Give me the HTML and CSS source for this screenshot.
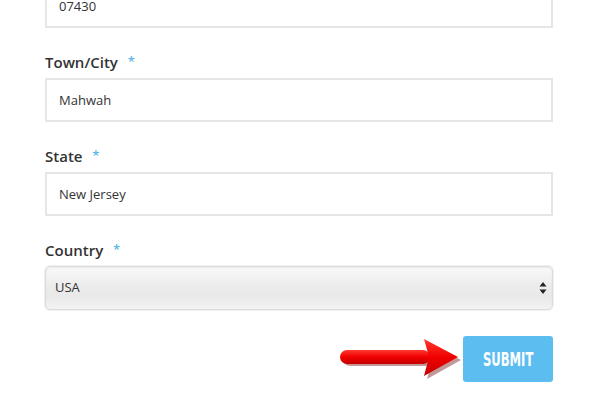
FILE: index.html
```html
<!DOCTYPE html>
<html lang="en">
<head>
  <meta charset="UTF-8" />
  <title>Billing Address</title>
  <link rel="stylesheet" href="styles.css">
</head>
<body>
  <form class="address-form">
    <div class="field">
      <input type="text" value="07430">
    </div>

    <div class="field">
      <label>Town/City <span class="req">*</span></label>
      <input type="text" value="Mahwah">
    </div>

    <div class="field">
      <label>State <span class="req">*</span></label>
      <input type="text" value="New Jersey">
    </div>

    <div class="field">
      <label>Country <span class="req">*</span></label>
      <div class="select-wrap">
        <select>
          <option>USA</option>
          <option>Canada</option>
        </select>
        <svg class="select-arrows" width="8" height="14" viewBox="0 0 8 14">
          <path d="M4 1 L7.5 5.5 L0.5 5.5 Z" fill="#222"/>
          <path d="M4 13 L7.5 8.5 L0.5 8.5 Z" fill="#222"/>
        </svg>
      </div>
    </div>

    <div class="actions">
      <!-- annotation arrow pointing at the button -->
      <svg class="pointer" width="124" height="46" viewBox="0 0 124 46">
        <defs>
          <linearGradient id="red" x1="0" y1="0" x2="0" y2="1">
            <stop offset="0" stop-color="#ff3a2e"/>
            <stop offset="0.5" stop-color="#f00000"/>
            <stop offset="1" stop-color="#c40000"/>
          </linearGradient>
        </defs>
        <g transform="translate(2 2)" fill="#7a2020" opacity="0.45">
          <rect x="2" y="14" width="90" height="14" rx="7"/>
          <path d="M86 3 L120 22 L86 41 L91 22 Z"/>
        </g>
        <rect x="1" y="14" width="90" height="14" rx="7" fill="url(#red)"/>
        <path d="M85 3 L119 21 L85 40 L90 21 Z" fill="url(#red)"/>
      </svg>
      <button type="button" class="submit"><span>SUBMIT</span></button>
    </div>
  </form>
</body>
</html>
```

FILE: styles.css
```css
body {
  margin: 0;
  background: #fff;
  font-family: 'Open Sans', 'Liberation Sans', sans-serif;
  color: #333;
}

.address-form {
  width: 508px;
  margin: -16px 0 0 45px;
}

.field {
  margin-bottom: 24px;
}

.field label {
  display: block;
  font-size: 15px;
  font-weight: 600;
  line-height: 20px;
  color: #333;
  margin-bottom: 6px;
}

.req {
  color: #5bb8e8;
  font-size: 13px;
  line-height: 1;
  margin-left: 6px;
  vertical-align: 2px;
}

.field input {
  display: block;
  box-sizing: border-box;
  width: 100%;
  height: 44px;
  padding: 0 12px;
  border: 2px solid #e6e6e6;
  border-radius: 0;
  font-family: 'Open Sans', 'Liberation Sans', sans-serif;
  font-size: 13px;
  color: #333;
  outline: none;
}

.select-wrap {
  position: relative;
}

.select-wrap select {
  display: block;
  box-sizing: border-box;
  width: 100%;
  height: 44px;
  padding: 0 9px 2px;
  appearance: none;
  -webkit-appearance: none;
  border: 1px solid #dcdcdc;
  border-radius: 5px;
  background: linear-gradient(#f9f9f9, #ececec 45%, #e9e9e9 70%, #f3f3f3);
  box-shadow: 0 0 0 1px #f0f0f0, inset 0 1px 2px rgba(0, 0, 0, 0.06);
  font-family: 'Open Sans', 'Liberation Sans', sans-serif;
  font-size: 13px;
  color: #333;
}

.select-arrows {
  position: absolute;
  right: 6px;
  top: 15px;
}

.actions {
  display: flex;
  justify-content: flex-end;
  align-items: center;
  margin-top: 26px;
}

.pointer {
  display: block;
}

.submit {
  width: 90px;
  height: 46px;
  padding: 0;
  border: none;
  border-radius: 3px;
  background: #5bbdf0;
  color: #fff;
  font-family: 'DejaVu Sans Condensed', 'DejaVu Sans', sans-serif;
  font-weight: bold;
  font-size: 19px;
  cursor: pointer;
}

.submit span {
  display: inline-block;
  transform: scaleX(0.68);
}
```
